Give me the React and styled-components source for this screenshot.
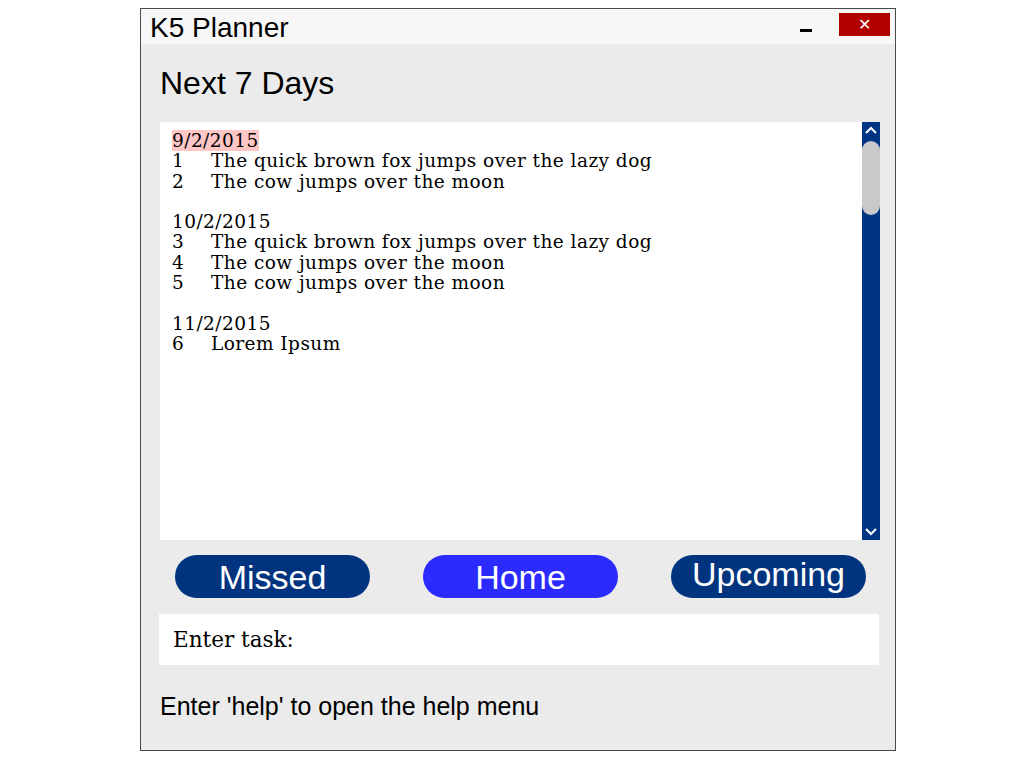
import React from 'react';
import styled, { createGlobalStyle } from 'styled-components';

const Global = createGlobalStyle`
  html, body { margin: 0; padding: 0; background: #ffffff; }
  body { font-family: "Liberation Sans", Arial, sans-serif; }
`;

const Page = styled.div`
  width: 1024px;
  height: 768px;
  padding: 8px 0 0 140px;
  box-sizing: border-box;
`;

const Window = styled.div`
  width: 756px;
  height: 743px;
  box-sizing: border-box;
  border: 1px solid #4a4a4a;
  background: #ebebeb;
  display: flex;
  flex-direction: column;
`;

const TitleBar = styled.div`
  height: 35px;
  background: #f7f7f7;
  display: flex;
  align-items: center;
  padding: 0 5px 0 9px;
`;

const Title = styled.div`
  flex: 1;
  font-size: 28px;
  color: #000;
  line-height: 35px;
  margin-top: 2px;
`;

const Minimize = styled.div`
  width: 12px;
  height: 3px;
  background: #000;
  margin: 8px 27px 0 0;
`;

const Close = styled.div`
  width: 51px;
  height: 23px;
  background: #b20000;
  color: #fff;
  font-size: 16px;
  display: flex;
  align-items: center;
  justify-content: center;
  margin-top: -5px;
`;

const Heading = styled.h1`
  margin: 0;
  padding: 20px 0 0 19px;
  height: 58px;
  font-weight: normal;
  font-size: 32px;
  color: #000;
  line-height: 38px;
`;

const ListWrap = styled.div`
  margin: 0 15px 0 19px;
  height: 418px;
  display: flex;
`;

const List = styled.div`
  flex: 1;
  background: #fff;
  padding: 9px 12px;
  font-family: "DejaVu Serif", "Liberation Serif", serif;
  font-size: 18.5px;
  letter-spacing: 0.45px;
  line-height: 20.3px;
  color: #000;
`;

const Group = styled.div`
  margin-bottom: 20.3px;
`;

const DateLine = styled.div`
  span {
    background: ${p => (p.$today ? '#ffc6c6' : 'transparent')};
  }
`;

const Item = styled.div`
  display: flex;
`;

const Num = styled.span`
  width: 39px;
`;

const Scrollbar = styled.div`
  width: 18px;
  background: #003584;
  display: flex;
  flex-direction: column;
  align-items: center;
`;

const Arrow = styled.svg`
  width: 18px;
  height: 18px;
  flex: none;
`;

const Thumb = styled.div`
  width: 18px;
  height: 74px;
  background: #c9c9c9;
  border-radius: 9px;
  margin-top: 1px;
`;

const Track = styled.div`
  flex: 1;
`;

const Buttons = styled.div`
  display: flex;
  justify-content: space-between;
  padding: 15px 29px 0 34px;
  height: 59px;
  box-sizing: border-box;
`;

const NavButton = styled.div`
  width: 195px;
  height: 43px;
  border-radius: 22px;
  background: ${p => (p.$active ? '#2b2bff' : '#00347f')};
  color: #fff;
  font-size: 34px;
  display: flex;
  align-items: center;
  justify-content: center;
  line-height: 1;
  padding-bottom: ${p => (p.$raised ? '6px' : '0')};
  box-sizing: border-box;
`;

const TaskBox = styled.div`
  margin: 15px 16px 0 18px;
  height: 51px;
  background: #fff;
  display: flex;
  align-items: center;
  padding-left: 14px;
  font-family: "DejaVu Serif", "Liberation Serif", serif;
  font-size: 21.5px;
  color: #000;
`;

const Help = styled.div`
  padding: 27px 0 0 19px;
  font-size: 25px;
  color: #000;
`;

const groups = [
  { date: '9/2/2015', today: true, items: [[1, 'The quick brown fox jumps over the lazy dog'], [2, 'The cow jumps over the moon']] },
  { date: '10/2/2015', items: [[3, 'The quick brown fox jumps over the lazy dog'], [4, 'The cow jumps over the moon'], [5, 'The cow jumps over the moon']] },
  { date: '11/2/2015', items: [[6, 'Lorem Ipsum']] }
];

export default function App() {
  return (
    <Page>
      <Global />
      <Window>
        <TitleBar>
          <Title>K5 Planner</Title>
          <Minimize />
          <Close>✕</Close>
        </TitleBar>
        <Heading>Next 7 Days</Heading>
        <ListWrap>
          <List>
            {groups.map(g => (
              <Group key={g.date}>
                <DateLine $today={g.today}><span>{g.date}</span></DateLine>
                {g.items.map(([n, t]) => (
                  <Item key={n}><Num>{n}</Num><span>{t}</span></Item>
                ))}
              </Group>
            ))}
          </List>
          <Scrollbar>
            <Arrow viewBox="0 0 18 18">
              <path d="M4 11 L9 6 L14 11" fill="none" stroke="#fff" strokeWidth="2" />
            </Arrow>
            <Thumb />
            <Track />
            <Arrow viewBox="0 0 18 18">
              <path d="M4 7 L9 12 L14 7" fill="none" stroke="#fff" strokeWidth="2" />
            </Arrow>
          </Scrollbar>
        </ListWrap>
        <Buttons>
          <NavButton>Missed</NavButton>
          <NavButton $active>Home</NavButton>
          <NavButton $raised>Upcoming</NavButton>
        </Buttons>
        <TaskBox>Enter task:</TaskBox>
        <Help>Enter 'help' to open the help menu</Help>
      </Window>
    </Page>
  );
}
